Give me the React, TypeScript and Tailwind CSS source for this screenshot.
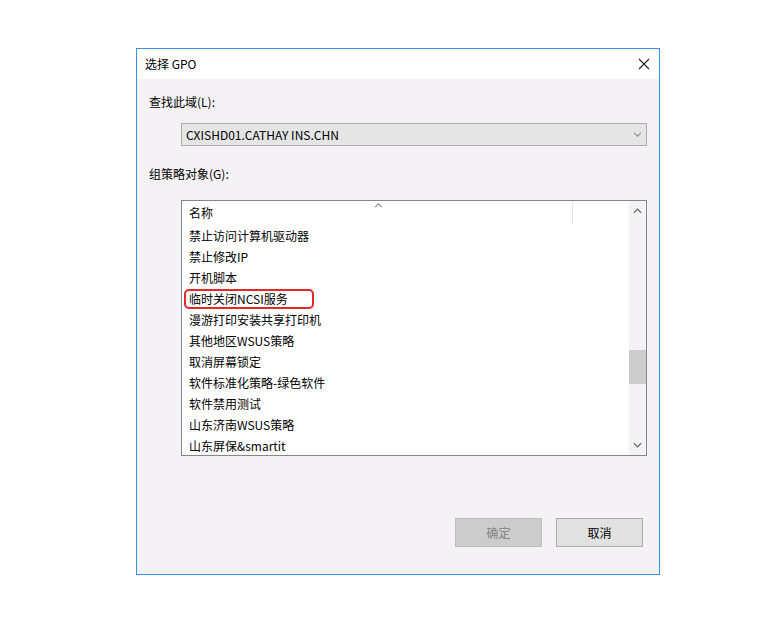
import React from 'react';

const items = [
  '禁止访问计算机驱动器',
  '禁止修改IP',
  '开机脚本',
  '临时关闭NCSI服务',
  '漫游打印安装共享打印机',
  '其他地区WSUS策略',
  '取消屏幕锁定',
  '软件标准化策略-绿色软件',
  '软件禁用测试',
  '山东济南WSUS策略',
  '山东屏保&smartit',
];

const Chevron: React.FC<{ up?: boolean; className?: string; stroke?: string }> = ({ up, className, stroke = '#606060' }) => (
  <svg className={className} viewBox="0 0 10 6" fill="none">
    <path d={up ? 'M1 5 L5 1 L9 5' : 'M1 1 L5 5 L9 1'} stroke={stroke} strokeWidth="1.3" />
  </svg>
);

const App: React.FC = () => {
  return (
    <div
      className="w-[758px] h-[632px] bg-white pt-[48px] pl-[136px] text-[12px] text-black"
      style={{ fontFamily: '"Noto Sans CJK SC", "Noto Sans", sans-serif' }}
    >
      <div className="w-[524px] h-[527px] border border-[#3f8fe0] flex flex-col">
        {/* title bar */}
        <div className="h-[30px] bg-white flex items-center justify-between pl-[8px] pr-[9px] shrink-0">
          <span className="leading-[16px]">选择 GPO</span>
          <svg width="12" height="12" viewBox="0 0 12 12">
            <path d="M1 1 L11 11 M11 1 L1 11" stroke="#222" strokeWidth="1.1" />
          </svg>
        </div>

        {/* content */}
        <div className="flex-1 bg-[#f4f2f5] flex flex-col pt-[15px] pl-[12px]">
          <div className="leading-[16px]">查找此域(L):</div>

          <div className="mt-[13px] ml-[32px] w-[466px] h-[23px] bg-[#e5e5e5] border border-[#adadad] flex items-center justify-between pl-[4px] pr-[4px]">
            <span className="leading-[16px]">CXISHD01.CATHAY INS.CHN</span>
            <Chevron className="w-[9px] h-[5px]" stroke="#8a8a8a" />
          </div>

          <div className="mt-[20px] leading-[16px]">组策略对象(G):</div>

          <div className="mt-[18px] ml-[32px] w-[466px] h-[256px] border border-[#828790] bg-white flex overflow-hidden">
            <div className="flex-1 flex flex-col">
              {/* header */}
              <div className="h-[24px] shrink-0 flex relative">
                <div className="w-[390px] flex items-center pl-[7px] leading-[16px] relative">
                  名称
                  <Chevron up className="absolute left-[192px] top-[2px] w-[9px] h-[5px]" stroke="#8a8a8a" />
                </div>
                <div className="w-px my-[1px] bg-[#e5e5e5]" />
              </div>
              {items.map((t, i) => (
                <div key={i} className="h-[21px] shrink-0 flex items-center pl-[7px] leading-[16px] relative">
                  {t}
                  {i === 3 && (
                    <span className="absolute left-[2px] top-[1px] w-[130px] h-[20px] border-2 border-[#e2282b] rounded-[5px]" />
                  )}
                </div>
              ))}
            </div>

            {/* scrollbar */}
            <div className="w-[17px] bg-[#f4f2f5] flex flex-col items-center justify-between py-[7px] relative">
              <Chevron up className="w-[9px] h-[6px]" />
              <div className="absolute left-0 top-[149px] w-[17px] h-[34px] bg-[#cdcdcd]" />
              <Chevron className="w-[9px] h-[6px]" />
            </div>
          </div>

          <div className="mt-[62px] ml-[306px] flex gap-[14px]">
            <div className="w-[87px] h-[29px] bg-[#cccccc] border border-[#bfbfbf] flex items-center justify-center text-[#838383] leading-[16px]">
              确定
            </div>
            <div className="w-[87px] h-[29px] bg-[#e1e1e1] border border-[#adadad] flex items-center justify-center leading-[16px]">
              取消
            </div>
          </div>
        </div>
      </div>
    </div>
  );
};

export default App;
